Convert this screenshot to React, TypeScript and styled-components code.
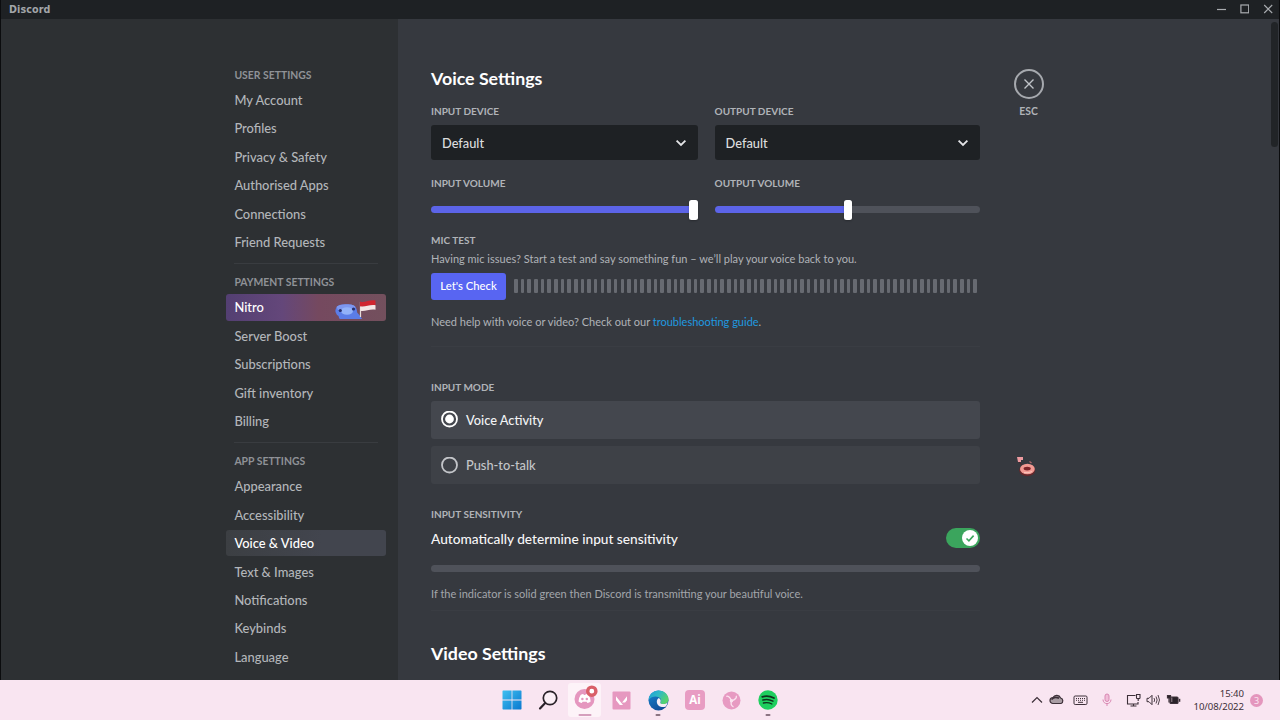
import React from 'react';
import styled, { createGlobalStyle, css } from 'styled-components';

const GlobalStyle = createGlobalStyle`
  * { box-sizing: border-box; }
  body {
    margin: 0;
    overflow: hidden;
    background: #0b0c0d;
    font-family: Lato, "Noto Sans", sans-serif;
  }
`;

/* ---------- shell ---------- */

const Screen = styled.div`
  width: 1280px;
  height: 720px;
  display: flex;
  flex-direction: column;
`;

const AppWindow = styled.div`
  flex: 1;
  min-height: 0;
  display: flex;
  flex-direction: column;
  padding: 0 1px;
  background: #0b0c0e;
`;

const TitleBar = styled.header`
  flex: none;
  height: 18.5px;
  display: flex;
  align-items: center;
  justify-content: space-between;
  padding: 0 6px 0 8px;
  background: #1e2124;
`;

const Brand = styled.span`
  padding-top: 2px;
  font: 700 9.6px/14px "DejaVu Sans", sans-serif;
  letter-spacing: 0.1px;
  color: #a2a5a9;
`;

const WindowControls = styled.div`
  display: flex;
  align-items: center;
  gap: 14px;
  color: #a9acb0;
`;

const Body = styled.div`
  flex: 1;
  min-height: 0;
  display: flex;
  overflow: hidden;
`;

/* ---------- sidebar ---------- */

const Sidebar = styled.nav`
  flex: none;
  width: 397px;
  padding: 43.3px 12px 0 225px;
  background: #2d3033;
  overflow: hidden;
`;

const NavHeading = styled.h3`
  margin: 0;
  height: 25px;
  padding-left: 8.4px;
  font-size: 10.4px;
  font-weight: 700;
  line-height: 26px;
  color: #8f9297;
`;

const NavItem = styled.a<{ $variant?: 'nitro' | 'active' }>`
  height: 26.4px;
  margin-bottom: 2px;
  padding-left: 8.4px;
  display: flex;
  align-items: center;
  justify-content: space-between;
  border-radius: 3px;
  font-size: 12.9px;
  font-weight: 500;
  line-height: 26px;
  color: #b3b6ba;
  ${p => p.$variant === 'active' && css`
    background: linear-gradient(90deg, #3c3f43, #42454e 60%);
    color: #fff;
  `}
  ${p => p.$variant === 'nitro' && css`
    background: linear-gradient(90deg, #533f72, #64477a 35%, #75495f 58%, #73505d);
    color: #fff;
  `}
`;

const NavDivider = styled.hr`
  height: 1px;
  margin: 8px 8px 5.1px 8px;
  border: 0;
  background: #393c40;
`;

/* ---------- content ---------- */

const Content = styled.main`
  position: relative;
  flex: 1;
  min-width: 0;
  display: flex;
  gap: 33.5px;
  padding: 0 0 0 33px;
  background: #36393f;
  overflow: hidden;
`;

const Panel = styled.div`
  flex: none;
  width: 549px;
  padding-top: 47.5px;
`;

const Title = styled.h2`
  margin: 0;
  height: 24px;
  font-size: 17.8px;
  font-weight: 700;
  line-height: 24px;
  color: #fff;
`;

const Label = styled.h3`
  margin: 0;
  height: 14px;
  font-size: 10px;
  font-weight: 700;
  line-height: 14px;
  color: #b0b3b8;
`;

const InputModeLabel = styled(Label)`
  margin-bottom: 7px;
`;

const SensitivityLabel = styled(Label)`
  margin-top: 23px;
`;

const Columns = styled.div`
  display: grid;
  grid-template-columns: 1fr 1fr;
  column-gap: 17px;
`;

const DeviceColumn = styled.div`
  padding-top: 14px;
`;

const Select = styled.div`
  height: 35px;
  margin: 7px 0 16px;
  padding: 0 11px;
  display: flex;
  align-items: center;
  justify-content: space-between;
  border-radius: 3px;
  background: #1e2124;
  color: #dcddde;
  font-size: 12.8px;
  font-weight: 500;
`;

const Slider = styled.div`
  height: 20px;
  margin-top: 9.6px;
  display: flex;
  align-items: center;
`;

const Track = styled.div<{ $filled?: boolean; $end?: boolean }>`
  flex: ${p => (p.$filled ? 'none' : 1)};
  height: 7px;
  border-radius: ${p => (p.$filled ? '4px 0 0 4px' : '0 4px 4px 0')};
  background: ${p => (p.$filled ? '#5c64e8' : '#4f525a')};
  width: ${p => (p.$filled ? (p.$end ? '258px' : '129px') : 'auto')};
`;

const Handle = styled.div`
  flex: none;
  width: 8.6px;
  height: 20px;
  border-radius: 2.5px;
  background: #fff;
  box-shadow: 0 1px 2px rgba(0, 0, 0, 0.25);
`;

const MicTest = styled.section`
  padding-top: 13.4px;
`;

const Help = styled.p`
  margin: 0;
  height: 16px;
  font-size: 11px;
  line-height: 16px;
  color: #b0b3b8;
`;

const MicHelp = styled(Help)`
  margin-top: 4px;
`;

const MicRow = styled.div`
  margin: 6px 0 14px;
  display: flex;
  align-items: center;
  gap: 8px;
`;

const CheckButton = styled.button`
  width: 75px;
  height: 27px;
  padding: 0;
  border: 0;
  border-radius: 3px;
  background: #5865f2;
  color: #fff;
  font: 500 11.3px/26px Lato, sans-serif;
`;

const Meter = styled.div`
  flex: 1;
  height: 14px;
  display: flex;
  justify-content: space-between;
  padding-right: 2.5px;
`;

const MeterBar = styled.i`
  width: 3.6px;
  height: 14px;
  border-radius: 1px;
  background: #676a71;
`;

const Link = styled.a`
  color: #1f9ae0;
`;

const Rule = styled.hr`
  height: 1px;
  margin: 16px 0 33px;
  border: 0;
  background: #3a3d43;
`;

const RadioCard = styled.div<{ $checked?: boolean }>`
  height: 38px;
  margin-bottom: 7.4px;
  padding-left: 10px;
  display: flex;
  align-items: center;
  gap: 8px;
  border-radius: 3px;
  background: ${p => (p.$checked ? '#44474e' : '#3e4147')};
  color: ${p => (p.$checked ? '#f2f3f5' : '#c3c5c9')};
  font-size: 12.8px;
  font-weight: 500;
`;

const SensitivityRow = styled.div`
  height: 24px;
  margin: 5px 0 15px;
  display: flex;
  align-items: center;
  justify-content: space-between;
  color: #f6f6f7;
  font-size: 13.68px;
  font-weight: 500;
`;

const Toggle = styled.span`
  width: 34px;
  height: 20px;
  padding: 2px;
  display: flex;
  justify-content: flex-end;
  border-radius: 10px;
  background: #3ba55d;
`;

const Indicator = styled.div`
  height: 7px;
  margin-bottom: 13.4px;
  border-radius: 4px;
  background: #4f525a;
`;

const SensitivityHelp = styled(Help)`
  color: #a3a6ab;
`;

const VideoRule = styled(Rule)`
  margin: 8px 0 30px;
`;

const CloseColumn = styled.div`
  width: 30px;
  padding-top: 50px;
  display: flex;
  flex-direction: column;
  align-items: center;
  gap: 5.4px;
`;

const CloseButton = styled.button`
  flex: none;
  width: 30px;
  height: 30px;
  padding: 0;
  display: grid;
  place-items: center;
  border: 2px solid #a6a9ae;
  border-radius: 50%;
  background: none;
  color: #c0c3c8;
`;

const Esc = styled.span`
  font-size: 10.4px;
  font-weight: 700;
  line-height: 14px;
  color: #b0b3b8;
`;

const Scrollbar = styled.div`
  position: absolute;
  top: 3px;
  right: 1px;
  width: 7px;
  height: 125px;
  border-radius: 4px;
  background: #212427;
`;

const Sticker = styled.svg`
  position: absolute;
  left: 616px;
  top: 436px;
`;

/* ---------- taskbar ---------- */

const Taskbar = styled.footer`
  flex: none;
  height: 40px;
  display: grid;
  grid-template-columns: 495px 1fr auto;
  padding-right: 17px;
  background: #f9e5f1;
`;

const Apps = styled.div`
  grid-column: 2;
  display: flex;
  align-items: center;
  gap: 3.7px;
`;

const AppSlot = styled.div<{ $active?: boolean }>`
  position: relative;
  width: 33px;
  height: 34px;
  display: grid;
  place-items: center;
  border-radius: 3px;
  background: ${p => (p.$active ? '#fdf3f8' : 'transparent')};
`;

const IconLift = styled.span`
  display: grid;
  margin: -5px 0 0 1px;
`;

const RunningMark = styled.i<{ $wide?: boolean }>`
  position: absolute;
  bottom: 1px;
  left: 50%;
  width: ${p => (p.$wide ? 13 : 5)}px;
  height: 2.4px;
  border-radius: 2px;
  transform: translateX(-50%);
  background: ${p => (p.$wide ? '#d59fbd' : '#8b7482')};
`;

const AiTile = styled.div`
  width: 20px;
  height: 20px;
  border-radius: 4px;
  background: #e89cc3;
  color: #fff;
  text-align: center;
  font: 700 11.5px/19px "Open Sans", sans-serif;
`;

const Tray = styled.div`
  display: flex;
  align-items: center;
  color: #3d3039;
`;

const Clock = styled.div`
  width: 60px;
  margin-left: 3px;
  text-align: right;
  font: 400 9.6px/13.4px "Noto Sans", sans-serif;
  letter-spacing: -0.05px;
  color: #3d3039;
`;

const CountBadge = styled.span`
  width: 13px;
  height: 13px;
  margin-left: 6px;
  border-radius: 50%;
  background: #e496bd;
  color: #fbe6f2;
  text-align: center;
  font: 400 9px/13px "Noto Sans", sans-serif;
`;

/* ---------- drawings ---------- */

const Chevron = () => (
  <svg width="12" height="8" viewBox="0 0 12 8" fill="none" stroke="#e4e5e7" strokeWidth="1.8">
    <path d="M1.6 1.6 6 6l4.4-4.4" />
  </svg>
);

const NitroArt = () => (
  <svg width="54" height="26" viewBox="0 0 54 26">
    <path d="M3.5 18c-.6-4.5 3-7.5 7-7.5h7c4.5 0 7.5 3 7.5 7 0 2 3 3 5 7.500H8C6 24 8 22 5 21Z" fill="#5b7de8" />
    <path d="M4.500 13c1-3 17-4.500 19 0l-2 3H6Z" fill="#7d97f0" />
    <ellipse cx="15" cy="17" rx="6" ry="3.8" fill="#92b2fa" />
    <circle cx="8.3" cy="16.5" r="1.6" fill="#27306e" />
    <circle cx="21.5" cy="15" r="1.6" fill="#27306e" />
    <path d="M28.5 8v15" stroke="#e6dcd8" strokeWidth="1.2" />
    <path d="M28 7.5c4 2 9-2 15.500-1v5c-6-1-11 2-15.500 1Z" fill="#d0262f" />
    <path d="M28.5 12.200c4 1.300 9-2 15-1v4.500c-6-1-10.500 2-15 1Z" fill="#f4e6e4" />
  </svg>
);

const RadioMark = ({ checked }: { checked?: boolean }) => (
  <svg width="17" height="17" viewBox="0 0 17 17">
    <circle cx="8.5" cy="8" r="7.5" fill="none" stroke={checked ? '#fff' : '#c3c5c9'} strokeWidth="1.8" />
    {checked && <circle cx="8.5" cy="8" r="4.4" fill="#fff" />}
  </svg>
);

const DiscordIcon = () => (
  <svg width="26" height="26" viewBox="0 0 26 26">
    <circle cx="12.5" cy="14" r="10" fill="#e597bf" />
    <path d="M8.6 9.9q1.600-.9 2.800-.8l.4.900h1.600l.4-.9q1.300 0 2.800.8 2 3 2.100 6.600-1.500 1.300-3.300 1.600l-.8-1.300h-4l-.8 1.300q-1.800-.3-3.300-1.600.1-3.600 2.100-6.600Z" fill="#fff" />
    <circle cx="10.4" cy="14" r="1.25" fill="#e597bf" />
    <circle cx="14.8" cy="14" r="1.25" fill="#e597bf" />
    <circle cx="19.8" cy="6.2" r="4.1" fill="#fff" stroke="#d95f68" strokeWidth="3.4" />
  </svg>
);

const EdgeIcon = () => (
  <svg width="21" height="21" viewBox="0 0 21 21">
    <defs>
      <linearGradient id="edgeTop" x1="0" y1="0" x2="1" y2=".5">
        <stop offset="0" stopColor="#1d9fd8" />
        <stop offset=".5" stopColor="#2fb9c6" />
        <stop offset="1" stopColor="#58d36d" />
      </linearGradient>
      <linearGradient id="edgeLow" x1="0" y1="0" x2=".6" y2="1">
        <stop offset="0" stopColor="#1687d2" />
        <stop offset="1" stopColor="#124c97" />
      </linearGradient>
    </defs>
    <circle cx="10.5" cy="10.5" r="10" fill="url(#edgeLow)" />
    <path d="M.6 10C1 4 5.500.5 10.500.500c6 0 10 4.300 10 8.700 0 3-2.300 4.900-5 4.900-2.500 0-3.600-.9-3.200-1.600.8-1.200 1-2.500.1-3.900C10.500 5.600 3.500 5.500.6 10Z" fill="url(#edgeTop)" />
    <path d="M12.300 12.500c-.4.700.7 1.600 3.200 1.600 1.800 0 3.400-.8 4.300-2.200-.3 1.800-1 3.300-2 4.500-3 1.600-8.500.5-9-4.400-.1-1.800.8-3.300 2-4 2 1 2.300 3 1.500 4.500Z" fill="#f5edf6" />
  </svg>
);

const TitleControls = () => (
  <WindowControls>
    <svg width="10" height="10" viewBox="0 0 10 10" stroke="currentColor"><path d="M1 5.500h9" strokeWidth="1.2" /></svg>
    <svg width="9" height="10" viewBox="0 0 9 10" fill="none" stroke="currentColor"><rect x=".9" y="1" width="7.8" height="7.8" strokeWidth="1.2" /></svg>
    <svg width="10" height="10" viewBox="0 0 10 10" stroke="currentColor"><path d="m1.200 1 8 8M9.200 1l-8 8" strokeWidth="1.1" /></svg>
  </WindowControls>
);

/* ---------- data ---------- */

const groups = [
  { heading: 'USER SETTINGS', items: ['My Account', 'Profiles', 'Privacy & Safety', 'Authorised Apps', 'Connections', 'Friend Requests'] },
  { heading: 'PAYMENT SETTINGS', items: ['Nitro', 'Server Boost', 'Subscriptions', 'Gift inventory', 'Billing'] },
  { heading: 'APP SETTINGS', items: ['Appearance', 'Accessibility', 'Voice & Video', 'Text & Images', 'Notifications', 'Keybinds', 'Language'] },
];

const devices = [
  { name: 'INPUT', full: true },
  { name: 'OUTPUT', full: false },
];

const variantOf = (item: string) =>
  item === 'Nitro' ? 'nitro' : item === 'Voice & Video' ? 'active' : undefined;

const meterBars = Array.from({ length: 70 }, (_, i) => i);

export default function App() {
  return (
    <Screen>
      <GlobalStyle />
      <AppWindow>
        <TitleBar>
          <Brand>Discord</Brand>
          <TitleControls />
        </TitleBar>
        <Body>
          <Sidebar>
            {groups.map((group, index) => (
              <React.Fragment key={group.heading}>
                {index > 0 && <NavDivider />}
                <NavHeading>{group.heading}</NavHeading>
                {group.items.map(item => (
                  <NavItem key={item} $variant={variantOf(item)}>
                    {item}
                    {item === 'Nitro' && <NitroArt />}
                  </NavItem>
                ))}
              </React.Fragment>
            ))}
          </Sidebar>

          <Content>
            <Panel>
              <Title>Voice Settings</Title>
              <Columns>
                {devices.map(device => (
                  <DeviceColumn key={device.name}>
                    <Label>{device.name} DEVICE</Label>
                    <Select>Default<Chevron /></Select>
                    <Label>{device.name} VOLUME</Label>
                    <Slider>
                      <Track $filled $end={device.full} />
                      <Handle />
                      {!device.full && <Track />}
                    </Slider>
                  </DeviceColumn>
                ))}
              </Columns>

              <MicTest>
                <Label>MIC TEST</Label>
                <MicHelp>Having mic issues? Start a test and say something fun – we’ll play your voice back to you.</MicHelp>
                <MicRow>
                  <CheckButton>Let's Check</CheckButton>
                  <Meter>{meterBars.map(i => <MeterBar key={i} />)}</Meter>
                </MicRow>
                <Help>Need help with voice or video? Check out our <Link>troubleshooting guide</Link>.</Help>
              </MicTest>
              <Rule />

              <InputModeLabel>INPUT MODE</InputModeLabel>
              <RadioCard $checked><RadioMark checked />Voice Activity</RadioCard>
              <RadioCard><RadioMark />Push-to-talk</RadioCard>

              <SensitivityLabel>INPUT SENSITIVITY</SensitivityLabel>
              <SensitivityRow>
                Automatically determine input sensitivity
                <Toggle>
                  <svg width="16" height="16" viewBox="0 0 16 16">
                    <circle cx="8" cy="8" r="8" fill="#fff" />
                    <path d="m4.500 8.500 2.400 2.300 4.700-5.200" fill="none" stroke="#3ba55d" strokeWidth="1.6" />
                  </svg>
                </Toggle>
              </SensitivityRow>
              <Indicator />
              <SensitivityHelp>If the indicator is solid green then Discord is transmitting your beautiful voice.</SensitivityHelp>
              <VideoRule />
              <Title>Video Settings</Title>
            </Panel>

            <CloseColumn>
              <CloseButton>
                <svg width="12" height="12" viewBox="0 0 12 12" stroke="currentColor" strokeWidth="1.4">
                  <path d="m1.500 1.500 9 9M10.500 1.500l-9 9" />
                </svg>
              </CloseButton>
              <Esc>ESC</Esc>
            </CloseColumn>

            <Sticker width="24" height="24" viewBox="0 0 24 24">
              <path d="M3 2h6v3H7v2H4Z" fill="#ee9ba0" />
              <path d="M5 7l3 3" stroke="#4a2529" strokeWidth="1" />
              <path d="M15.500 6.500l2 1.500" stroke="#b56a70" strokeWidth="1.2" />
              <ellipse cx="13.2" cy="15.2" rx="8" ry="6" fill="#64272b" />
              <ellipse cx="13.4" cy="14" rx="7.4" ry="5.2" fill="#f29a93" />
              <ellipse cx="13.2" cy="13.6" rx="3.6" ry="1.9" fill="#7c2429" />
              <path d="M10 17.500q4 1 8-1" stroke="#fbc7bd" strokeWidth="1" fill="none" />
            </Sticker>
            <Scrollbar />
          </Content>
        </Body>
      </AppWindow>

      <Taskbar>
        <Apps>
          <AppSlot>
            <svg width="20" height="20" viewBox="0 0 20 20">
              <defs>
                <linearGradient id="win" x1="0" y1="0" x2="1" y2="1">
                  <stop offset="0" stopColor="#3fc0f0" />
                  <stop offset="1" stopColor="#0a78cf" />
                </linearGradient>
              </defs>
              <path d="M1 .5h8.600v9.100H.5V1ZM10.400.5H19l.5.5v8.600h-9.100ZM.5 10.400h9.100v9.100H1l-.5-.5ZM10.400 10.400h9.100V19l-.5.5h-8.600Z" fill="url(#win)" />
            </svg>
          </AppSlot>
          <AppSlot>
            <svg width="20" height="20" viewBox="0 0 20 20" fill="none" stroke="#2a2229">
              <circle cx="12" cy="8" r="6.7" strokeWidth="1.7" fill="#fbeff6" />
              <path d="m7.200 13-5.200 5.400" strokeWidth="2.2" strokeLinecap="round" />
            </svg>
          </AppSlot>
          <AppSlot $active><IconLift><DiscordIcon /></IconLift><RunningMark $wide /></AppSlot>
          <AppSlot>
            <svg width="19" height="19" viewBox="0 0 19 19">
              <rect x=".5" y=".5" width="18" height="18" rx="1" fill="#e698c0" />
              <path d="M4 5.200 11 14H7.800L4 9.300ZM15 5.200v4.100l-1.900 2.300h-3Z" fill="#fff" />
            </svg>
          </AppSlot>
          <AppSlot><EdgeIcon /><RunningMark /></AppSlot>
          <AppSlot><AiTile>Ai</AiTile></AppSlot>
          <AppSlot>
            <svg width="19" height="19" viewBox="0 0 19 19" fill="none">
              <circle cx="9.5" cy="9.5" r="9" fill="#e79ac2" />
              <path d="M9.500 9.800C8 6 5.500 4.500 4.300 5.500M9.500 9.800c4-1 5.500-3.500 4.700-5M9.500 9.800c-1 3.500.5 5.500 2 6" stroke="#fbe3f0" strokeWidth="1.3" />
              <circle cx="9.5" cy="9.7" r="1.7" fill="#fbe3f0" />
            </svg>
          </AppSlot>
          <AppSlot>
            <svg width="20" height="20" viewBox="0 0 20 20" fill="none" stroke="#10321d" strokeLinecap="round">
              <circle cx="10" cy="10" r="9.7" fill="#1fcf5f" stroke="none" />
              <path d="M4.300 6.800q6-1.700 11.600 1.200" strokeWidth="1.9" />
              <path d="M4.900 10q5.200-1.400 10 1.100" strokeWidth="1.6" />
              <path d="M5.400 13q4.500-1.100 8.500 1" strokeWidth="1.3" />
            </svg>
            <RunningMark />
          </AppSlot>
        </Apps>
        <Tray>
          <svg width="150" height="24" viewBox="0 0 150 24" fill="none" stroke="currentColor">
            <path d="m1 14.500 5-5 5 5" strokeWidth="1.2" />
            <path d="M22 15.500a3 3 0 0 1 0-6 4.200 4.200 0 0 1 7.600.5 2.900 2.900 0 0 1 .4 5.500Z" fill="#a99da4" strokeWidth="1.2" />
            <path d="M20.500 11.500q3-3.500 7.500-1.200" strokeWidth="1.6" />
            <rect x="43" y="8" width="13" height="8.5" rx="1.2" strokeWidth="1" />
            <path d="M45 10.500h9M45 12.300h9" strokeWidth="1" strokeDasharray="1 1" />
            <path d="M47 14.300h5" strokeWidth="1" />
            <rect x="74" y="6" width="4" height="7.5" rx="2" stroke="#d987b2" fill="#f0bdd8" strokeWidth="1" />
            <path d="M72 11.500c0 5.500 8 5.500 8 0M76 15.700V18" stroke="#d987b2" strokeWidth="1" />
            <path d="M104.500 7.500H96.500v8.500h10.500v-2M99.500 18h6M102.500 16v2" strokeWidth="1.1" />
            <path d="M105.500 6.500h3.500v3.500c0 1-3.500 1-3.500 0ZM107.200 10.800V13" strokeWidth="1.1" />
            <path d="M116 10.300h2l3-3v9.400l-3-3h-2Z" strokeWidth="1" />
            <path d="M123 10q1.300 2 0 4M125 8.500q2.300 3.500 0 7M127 7q3 5 0 10" strokeWidth=".9" />
            <rect x="139" y="9" width="8" height="6.5" rx="1" fill="#2a2229" strokeWidth="1.2" />
            <path d="M148.600 10.800v3" strokeWidth="1.4" />
            <path d="M136.500 7.500h3v2.500h-3ZM138 10v4.500" fill="#2a2229" strokeWidth="1.2" />
            <path d="M140.800 9.500v4.500" stroke="#cdb9c4" strokeWidth=".7" />
          </svg>
          <Clock>15:40<br />10/08/2022</Clock>
          <CountBadge>3</CountBadge>
        </Tray>
      </Taskbar>
    </Screen>
  );
}
